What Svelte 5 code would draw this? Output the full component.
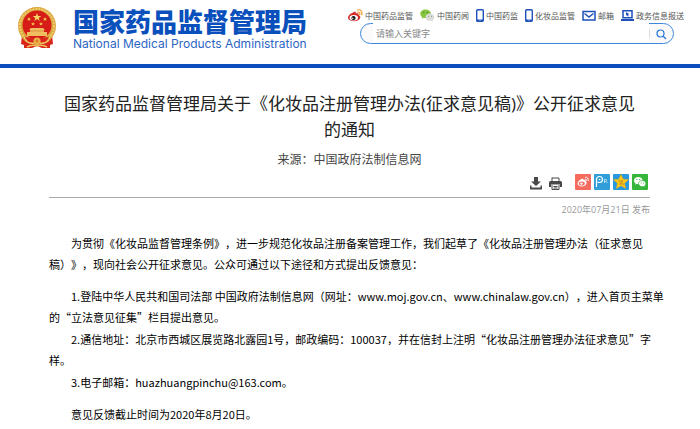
<script lang="ts">
  type NavIcon = 'weibo' | 'wechat' | 'phone' | 'mail' | 'laptop';

  const NAV_LINKS: { icon: NavIcon; label: string }[] = [
    { icon: 'weibo', label: '中国药品监管' },
    { icon: 'wechat', label: '中国药闻' },
    { icon: 'phone', label: '中国药监' },
    { icon: 'phone', label: '化妆品监管' },
    { icon: 'mail', label: '邮箱' },
    { icon: 'laptop', label: '政务信息报送' },
  ];

  let keyword = $state('');
</script>

<header class="site-header">
  <a class="brand" href="#home">
    <svg class="emblem" viewBox="0 0 40 42" aria-hidden="true">
      <path d="M5 28 4 37l3 1v3h8l5-2 5 2h8v-3l3-1-1-9-5 4H10z" fill="#d8261c" />
      <circle cx="20" cy="19" r="19" fill="#dba640" />
      <circle cx="20" cy="19" r="17" fill="none" stroke="#f0cb6a" stroke-width="2" stroke-dasharray="2 1" />
      <circle cx="20" cy="18" r="14.5" fill="#d51c16" />
      <path d="m20 6 1.100 3h3.200l-2.600 1.900 1 3.100-2.700-1.900-2.700 1.900 1-3.100L15.700 9h3.200z" fill="#f7d768" />
      <path d="m12 10 .6 1.400H14l-1 1 .4 1.500-1.400-.8-1.400.8.4-1.500-1-1h1.400zM28 10l.6 1.400H30l-1 1 .4 1.500-1.400-.8-1.400.8.4-1.500-1-1h1.400zM16 15l.5 1.200h1.400l-1 1 .4 1.300-1.300-.7-1.300.7.4-1.300-1-1h1.400zM24 15l.5 1.200h1.400l-1 1 .4 1.300-1.300-.7-1.300.7.4-1.300-1-1h1.400z" fill="#f3c94f" />
      <path d="M14 21h12l2 2h-1v2h3v4H10v-4h3v-2h-1z" fill="#f0bd60" />
      <path d="M13 24h14" stroke="#d9903f" />
      <path d="M8 30q12 2 24 0l-3 5q-9 4-18 0z" fill="#d9261d" />
      <circle cx="20" cy="34" r="3.500" fill="#e8b34b" />
      <circle cx="20" cy="34" r="1.500" fill="#e07a2c" />
      <path d="M8 33q4 4 9 3M32 33q-4 4-9 3M10 40q5-3 10-1 5-2 10 1" fill="none" stroke="#eec05c" stroke-width="1.500" />
    </svg>
    <span class="brand-text">
      <span class="brand-cn">国家药品监督管理局</span>
      <span class="brand-en">National Medical Products Administration</span>
    </span>
  </a>

  <div class="tools">
    <nav class="quick-links" aria-label="快捷入口">
      {#each NAV_LINKS as link}
        <a href="#nav">
          {#if link.icon === 'weibo'}
            <svg width="15" height="13" viewBox="0 0 15 13" aria-hidden="true">
              <path d="M5.500 3.200c1.500-.8 2.800-.3 2.300 1.300 2-.7 3.300 0 2.700 1.400 3.800 1.500 1.400 6.300-4.500 6.300C2.300 12.200 0 10.600 0 8.600c0-2 3-4.600 5.500-5.400z" fill="#d52a2a" />
              <ellipse cx="5.800" cy="8.800" rx="4.200" ry="2.700" fill="#fff" />
              <circle cx="5.500" cy="9" r="2.100" fill="#111" />
              <circle cx="4.800" cy="9.300" r=".7" fill="#fff" />
              <path d="M9.500 3c1.800-.2 2.700 1 2.300 2.600M9.800.8c3.200-.4 4.700 2 4 4.800" fill="none" stroke="#f29a26" stroke-width="1.200" stroke-linecap="round" />
            </svg>
          {:else if link.icon === 'wechat'}
            <svg width="15" height="13" viewBox="0 0 15 13" aria-hidden="true">
              <path d="M5.500.5C2.500.5.300 2.300.300 4.700c0 1.400.7 2.500 1.900 3.300l-.5 1.800 2-1c3.500 1 7.200-.900 7.200-4.200C10.900 2.200 8.500.5 5.500.5z" fill="#87c440" />
              <path d="M10 4.500c-2.500 0-4.500 1.600-4.500 3.700 0 2.600 2.900 4.200 5.900 3.500l1.700.8-.4-1.400c3.200-2.200 1.400-6.600-2.700-6.600z" fill="#d9ddd5" />
              <g fill="#45751c"><circle cx="3.800" cy="3.600" r=".7" /><circle cx="7.300" cy="3.600" r=".7" /></g>
              <g fill="#777"><circle cx="8.500" cy="7.300" r=".5" /><circle cx="11.500" cy="7.300" r=".5" /></g>
            </svg>
          {:else if link.icon === 'phone'}
            <svg width="8" height="13" viewBox="0 0 8 13" aria-hidden="true">
              <rect x=".7" y=".7" width="6.600" height="11.600" rx="1" fill="#fff" stroke="#1d50bb" stroke-width="1.400" />
              <path d="M1 10.500h6v1.500H1z" fill="#1d50bb" /><circle cx="4" cy="11" r=".6" fill="#fff" />
            </svg>
          {:else if link.icon === 'mail'}
            <svg width="14" height="13" viewBox="0 0 14 13" aria-hidden="true">
              <path d="M1 2.500h12v8.500H1zM2.500 4.500 7 8l4.500-3.500" fill="none" stroke="#1d50bb" stroke-width="1.500" />
            </svg>
          {:else}
            <svg width="13" height="13" viewBox="0 0 13 13" aria-hidden="true">
              <path d="M2 1.700h9v7H2z" fill="none" stroke="#1d50bb" stroke-width="1.500" />
              <path d="M0 10h13v2H0zM5 3l3.500 2.200-1.500.300.7 1.500-1 .4-.7-1.500-1 .9z" fill="#1d50bb" />
            </svg>
          {/if}
          {link.label}
        </a>
      {/each}
    </nav>

    <form class="search" onsubmit={(e) => e.preventDefault()}>
      <input type="text" aria-label="搜索" placeholder="请输入关键字" bind:value={keyword} />
      <button type="submit" aria-label="搜索">
        <svg width="11" height="11" viewBox="0 0 11 11" aria-hidden="true">
          <circle cx="4.500" cy="4.500" r="3.500" fill="none" stroke="#2878d8" stroke-width="1.200" />
          <path d="m7 7 3 3" stroke="#2878d8" stroke-width="1.200" />
        </svg>
      </button>
    </form>
  </div>
</header>

<main class="article">
  <h1>国家药品监督管理局关于《化妆品注册管理办法(征求意见稿)》公开征求意见的通知</h1>
  <p class="source">来源：中国政府法制信息网</p>

  <div class="actions">
    <button type="button" class="plain" aria-label="下载">
      <svg width="12" height="13" viewBox="0 0 12 13" aria-hidden="true">
        <path d="M4 0h4v4.500h3l-5 4.500-5-4.500h3zM0 8.500h1.500v2h9v-2H12v4H0z" fill="#484848" />
      </svg>
    </button>
    <button type="button" class="plain print" aria-label="打印">
      <svg width="13" height="13" viewBox="0 0 13 13" aria-hidden="true">
        <path d="M3 1h7v3" fill="none" stroke="#484848" />
        <path d="M2.500.5h1V4h-1zM1.500 4h10A1.500 1.500 0 0 1 13 5.500V10h-2V7.500H2V10H0V5.500A1.500 1.500 0 0 1 1.500 4z" fill="#484848" />
        <path d="M3 8v4.500h7V8M4.500 9.500h4M4.500 11h4" fill="none" stroke="#484848" />
      </svg>
    </button>
    <button type="button" class="share weibo" aria-label="分享到微博">
      <svg viewBox="0 0 16 16" aria-hidden="true">
        <path d="M6.500 5c1.200-.6 2.200-.2 1.900 1 1.600-.5 2.500 0 2 1.100 2.600 1.200 1 5.400-3.600 5.400-2.500 0-4.300-1.200-4.300-2.900C2.500 8 4.800 5.700 6.500 5z" fill="#fff" />
        <ellipse cx="6.800" cy="9.500" rx="3" ry="2" fill="#f56b5e" /><circle cx="6.500" cy="9.600" r="1.200" fill="#fff" />
        <path d="M10 5.200c1.300-.2 1.900.7 1.600 1.800M10.200 3.200c2.400-.2 3.600 1.600 3 3.800" fill="none" stroke="#fff" />
      </svg>
    </button>
    <button type="button" class="share pengyou" aria-label="分享到朋友网">
      <svg viewBox="0 0 16 16" aria-hidden="true">
        <path d="M2.500 13V5.500a3 3 0 1 1 3 3c-1 0-1.500-.3-1.700-.8M4.800 5.500h1.500" fill="none" stroke="#fff" stroke-width="1.200" />
        <path d="M10.500 9V5.500h1.200a1 1 0 0 1 0 2h-1.200M12 7.500 13.500 9" fill="none" stroke="#b8e1fa" />
      </svg>
    </button>
    <button type="button" class="share qzone" aria-label="分享到空间">
      <svg viewBox="0 0 16 16" aria-hidden="true">
        <path d="m8 .5 2.200 4.700 5.300.5-4 3.600 1.200 5.200L8 11.800l-4.700 2.700 1.200-5.200-4-3.600 5.300-.5z" fill="#ffc81c" stroke="#f1a900" stroke-width=".5" />
        <path d="M5.500 7H10l-3.500 3H11" fill="none" stroke="#a87a20" stroke-width=".8" />
      </svg>
    </button>
    <button type="button" class="share wechat" aria-label="分享到微信">
      <svg viewBox="0 0 16 16" aria-hidden="true">
        <path d="M6.300 3C4 3 2 4.500 2 6.500c0 1.200.6 2.100 1.500 2.700L3 10.800l1.900-1c3 .7 5.700-.9 5.700-3.300C10.600 4.500 8.600 3 6.300 3z" fill="#fff" />
        <path d="M10.300 6.500c-2 0-3.800 1.300-3.800 3.100 0 2.200 2.500 3.500 4.900 2.900l1.400.7-.3-1.200c2.600-1.900 1.200-5.500-2.200-5.500z" fill="#fff" stroke="#35b63a" stroke-width=".7" />
        <g fill="#35b63a"><circle cx="4.900" cy="5.500" r=".6" /><circle cx="7.600" cy="5.500" r=".6" /><circle cx="9.200" cy="9" r=".5" /><circle cx="11.500" cy="9" r=".5" /></g>
      </svg>
    </button>
  </div>

  <div class="date">2020年07月21日 发布</div>

  <div class="content">
    <p class="spaced">为贯彻《化妆品监督管理条例》，进一步规范化妆品注册备案管理工作，我们起草了《化妆品注册管理办法（征求意见稿）》，现向社会公开征求意见。公众可通过以下途径和方式提出反馈意见：</p>
    <p>1.登陆中华人民共和国司法部 中国政府法制信息网（网址：www.moj.gov.cn、www.chinalaw.gov.cn），进入首页主菜单的“立法意见征集”栏目提出意见。</p>
    <p>2.通信地址：北京市西城区展览路北露园1号，邮政编码：100037，并在信封上注明“化妆品注册管理办法征求意见”字样。</p>
    <p class="spaced">3.电子邮箱：huazhuangpinchu@163.com。</p>
    <p>意见反馈截止时间为2020年8月20日。</p>
  </div>
</main>

<style>
  :global(body) {
    margin: 0;
    background: #fff;
    font-family: 'Open Sans', 'Noto Sans CJK SC', sans-serif;
    text-spacing-trim: space-all;
  }

  button {
    padding: 0;
    border: 0;
    background: none;
    cursor: pointer;
  }

  svg {
    display: block;
    flex: none;
  }

  .site-header {
    display: flex;
    justify-content: space-between;
    box-sizing: border-box;
    height: 68px;
    padding: 7px 16px 0 17px;
    border-bottom: 4px solid #0b4dbd;
  }

  .brand {
    display: flex;
    gap: 16px;
    color: #0a50bd;
    text-decoration: none;
    white-space: nowrap;
  }

  .emblem {
    width: 40px;
    height: 42px;
  }

  .brand-text {
    display: flex;
    flex-direction: column;
    gap: 3px;
  }

  .brand-cn {
    font: 900 26px/28px 'Noto Sans CJK SC', sans-serif;
  }

  .brand-en {
    color: #2c66c4;
    font: 12px/12px Inter, 'Liberation Sans', sans-serif;
  }

  .tools {
    display: flex;
    flex-direction: column;
    gap: 1px;
    padding-top: 2px;
  }

  .quick-links {
    display: flex;
    gap: 7px;
  }

  .quick-links a {
    display: flex;
    align-items: center;
    gap: 2px;
    color: #555;
    font-size: 8px;
    line-height: 13px;
    text-decoration: none;
    white-space: nowrap;
  }

  .search {
    display: flex;
    box-sizing: border-box;
    height: 21px;
    margin: 0 10px 0 12px;
    padding-left: 12px;
    border: 1px solid #3c86dc;
    border-radius: 11px;
    background: #fafafa;
  }

  .search input {
    flex: 1;
    min-width: 0;
    margin-top: -1px;
    padding: 0 3px;
    border: 0;
    outline: 0;
    background: #fff;
    font: 9px 'Noto Sans CJK SC', sans-serif;
  }

  .search input::placeholder {
    color: #888;
  }

  .search button {
    display: grid;
    place-items: center;
    width: 24px;
    height: 9px;
    margin: 5px 0;
    border-left: 1px solid #ddd;
  }

  .article {
    padding: 23px 50px 0 49px;
  }

  h1 {
    margin: 0;
    padding: 0 10px;
    color: #222;
    font-size: 17px;
    font-weight: 400;
    line-height: 26px;
    text-align: center;
  }

  .source {
    margin: 7px 0 0;
    color: #444;
    font-size: 12px;
    line-height: 20px;
    text-align: center;
  }

  .actions {
    display: flex;
    justify-content: flex-end;
    align-items: center;
    gap: 3px;
    height: 16px;
    padding: 4px 2px 7px 0;
    border-bottom: 1px solid #aaa;
  }

  .plain {
    margin: 3px 4px 0 0;
  }

  .print {
    margin-right: 10px;
  }

  .share {
    width: 16px;
    height: 16px;
    border-radius: 1px;
  }

  .weibo { background: #f56b5e; }
  .pengyou { background: #319ed9; }
  .qzone { background: #2898e0; }
  .wechat { background: #35b63a; }

  .date {
    margin-top: 4px;
    color: #999;
    font-size: 9px;
    line-height: 16px;
    text-align: right;
  }

  /* CJK face first, so that the curly quotes come out full width */
  .content {
    margin: 15px -16px 0 0;
    color: #000;
    font-family: 'Noto Sans CJK SC', sans-serif;
    font-size: 11px;
    line-height: 21px;
  }

  .content p {
    margin: 0 0 1px;
    text-indent: 2em;
  }

  .content .spaced {
    margin-bottom: 11px;
  }
</style>
